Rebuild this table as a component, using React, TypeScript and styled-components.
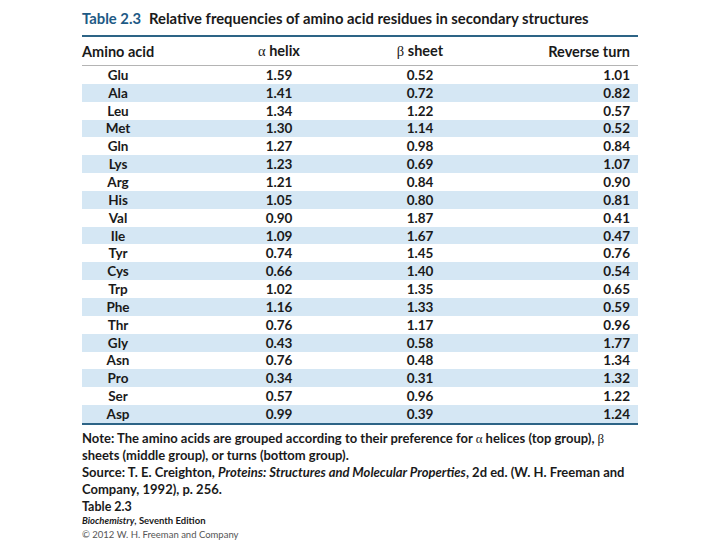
import styled, { createGlobalStyle } from "styled-components";

const GlobalStyle = createGlobalStyle`
  body {
    margin: 0;
    background: #ffffff;
    font-family: Lato, "Open Sans", sans-serif;
    color: #1a1a1a;
  }
`;

const Page = styled.div`
  width: 720px;
  height: 540px;
  padding: 8px 82px 0 82px;
  box-sizing: border-box;
  overflow: hidden;
`;

const Title = styled.div`
  font-size: 14.8px;
  font-weight: 700;
  line-height: 20px;
  height: 27px;
  white-space: nowrap;
`;

const TitleLabel = styled.span`
  color: #1e5a85;
  margin-right: 8px;
`;

const TopRule = styled.div`
  height: 2px;
  background: #2d6486;
`;

const Grid = styled.div`
  display: grid;
  grid-template-columns: 72px 85px 80px 61px 80px 1fr;
`;

const Header = styled(Grid)`
  height: 28px;
  align-items: center;
  font-size: 14.5px;
  font-weight: 700;
  border-bottom: 1.5px solid #b4b4b4;
`;

const Row = styled(Grid)<{ $stripe: boolean }>`
  height: 17.85px;
  align-items: center;
  font-size: 13.5px;
  font-weight: 700;
  background: ${(p) => (p.$stripe ? "#d5e7f4" : "transparent")};
`;

const Cell = styled.div<{ $col: string; $align?: string }>`
  grid-column: ${(p) => p.$col};
  text-align: ${(p) => p.$align || "center"};
  padding-right: ${(p) => (p.$align === "right" ? "8px" : "0")};
  white-space: nowrap;
`;

const Greek = styled.span`
  font-family: "Liberation Serif", serif;
  font-weight: 400;
`;

const BottomRule = styled.div`
  height: 2px;
  background: #2d6486;
`;

const Note = styled.div`
  margin-top: 5px;
  font-size: 13px;
  font-weight: 700;
  line-height: 17px;
  margin-right: -20px;
`;

const Credit = styled.div`
  margin-top: 1px;
`;

const CreditTitle = styled.div`
  font-size: 12.5px;
  font-weight: 700;
  line-height: 15px;
`;

const CreditBook = styled.div`
  font-size: 9.5px;
  font-weight: 700;
  line-height: 14px;
`;

const CreditCopy = styled.div`
  font-size: 9.5px;
  line-height: 13px;
  color: #555;
`;

const rows: [string, string, string, string][] = [
  ["Glu", "1.59", "0.52", "1.01"],
  ["Ala", "1.41", "0.72", "0.82"],
  ["Leu", "1.34", "1.22", "0.57"],
  ["Met", "1.30", "1.14", "0.52"],
  ["Gln", "1.27", "0.98", "0.84"],
  ["Lys", "1.23", "0.69", "1.07"],
  ["Arg", "1.21", "0.84", "0.90"],
  ["His", "1.05", "0.80", "0.81"],
  ["Val", "0.90", "1.87", "0.41"],
  ["Ile", "1.09", "1.67", "0.47"],
  ["Tyr", "0.74", "1.45", "0.76"],
  ["Cys", "0.66", "1.40", "0.54"],
  ["Trp", "1.02", "1.35", "0.65"],
  ["Phe", "1.16", "1.33", "0.59"],
  ["Thr", "0.76", "1.17", "0.96"],
  ["Gly", "0.43", "0.58", "1.77"],
  ["Asn", "0.76", "0.48", "1.34"],
  ["Pro", "0.34", "0.31", "1.32"],
  ["Ser", "0.57", "0.96", "1.22"],
  ["Asp", "0.99", "0.39", "1.24"],
];

export default function App() {
  return (
    <Page>
      <GlobalStyle />
      <Title>
        <TitleLabel>Table 2.3</TitleLabel>
        Relative frequencies of amino acid residues in secondary structures
      </Title>
      <TopRule />
      <Header>
        <Cell $col="1 / span 2" $align="left">Amino acid</Cell>
        <Cell $col="3">
          <Greek>α</Greek> helix
        </Cell>
        <Cell $col="5">
          <Greek>β</Greek> sheet
        </Cell>
        <Cell $col="6" $align="right">Reverse turn</Cell>
      </Header>
      {rows.map((r, i) => (
        <Row key={r[0]} $stripe={i % 2 === 1}>
          <Cell $col="1">{r[0]}</Cell>
          <Cell $col="3">{r[1]}</Cell>
          <Cell $col="5">{r[2]}</Cell>
          <Cell $col="6" $align="right">{r[3]}</Cell>
        </Row>
      ))}
      <BottomRule />
      <Note>
        Note: The amino acids are grouped according to their preference for <Greek>α</Greek> helices (top group), <Greek>β</Greek>
        <br />
        sheets (middle group), or turns (bottom group).
        <br />
        Source: T. E. Creighton, <i>Proteins: Structures and Molecular Properties</i>, 2d ed. (W. H. Freeman and
        <br />
        Company, 1992), p. 256.
      </Note>
      <Credit>
        <CreditTitle>Table 2.3</CreditTitle>
        <CreditBook>
          <i>Biochemistry</i>, Seventh Edition
        </CreditBook>
        <CreditCopy>© 2012 W. H. Freeman and Company</CreditCopy>
      </Credit>
    </Page>
  );
}
